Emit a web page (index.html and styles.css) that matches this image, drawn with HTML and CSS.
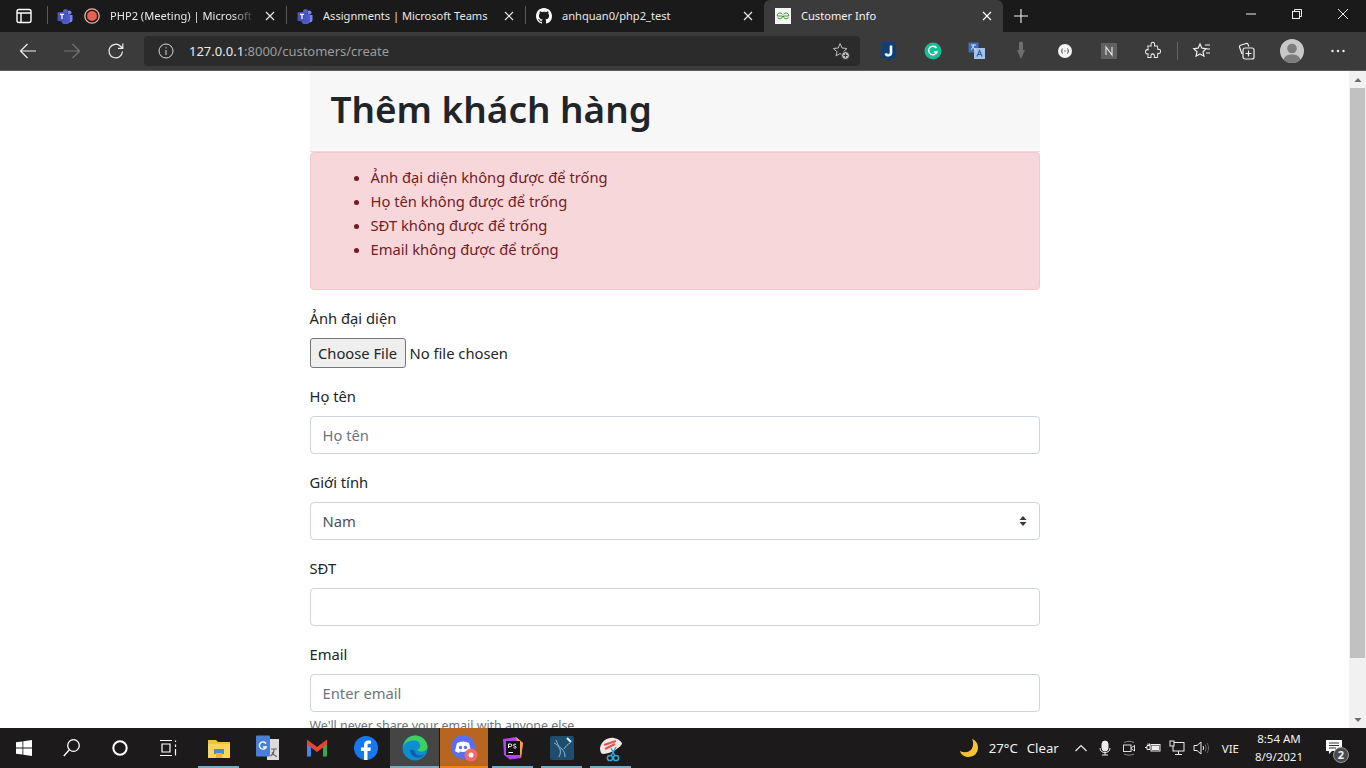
FILE: index.html
```html
<!DOCTYPE html>
<html lang="vi">
<head>
<meta charset="utf-8">
<title>Customer Info</title>
<link rel="stylesheet" href="styles.css">
</head>
<body>
<div class="tabstrip">
  <div class="tabstrip-btn"><svg class="i20" viewBox="0 0 20 20" fill="none" stroke="#fff" stroke-width="1.4"><rect x="3" y="3.5" width="14" height="13" rx="2"/><path d="M3 7h14M7 7v9.5"/></svg></div>
  <div class="sep"></div>
  <div class="tab tab-first">
    <svg class="fav" viewBox="0 0 16 16"><circle cx="12.5" cy="4.5" r="2" fill="#7b83eb"/><path d="M9 7h6.5v4.5a3 3 0 0 1-6 0z" fill="#7b83eb"/><circle cx="8.5" cy="3.5" r="2.5" fill="#5059c9"/><path d="M4 6h9v6a4 4 0 0 1-9 0z" fill="#5059c9"/><rect x="0.5" y="4" width="9" height="9" rx="1" fill="#4b53bc"/><path d="M3 6.3h4M5 6.3v4.6" stroke="#fff" stroke-width="1.2"/></svg>
    <svg class="fav rec" viewBox="0 0 16 16"><circle cx="8" cy="8" r="7.200" fill="none" stroke="#f3b3ab" stroke-width="1.300"/><circle cx="8" cy="8" r="5" fill="#e8604f"/></svg>
    <span class="tab-title fade">PHP2 (Meeting) | Microsoft Teams</span>
    <svg class="close" viewBox="0 0 10 10" stroke="#e6e6e6" stroke-width="1.2"><path d="M1 1l8 8M9 1l-8 8"/></svg>
  </div>
  <div class="sep"></div>
  <div class="tab">
    <svg class="fav" viewBox="0 0 16 16"><circle cx="12.5" cy="4.5" r="2" fill="#7b83eb"/><path d="M9 7h6.5v4.5a3 3 0 0 1-6 0z" fill="#7b83eb"/><circle cx="8.5" cy="3.5" r="2.5" fill="#5059c9"/><path d="M4 6h9v6a4 4 0 0 1-9 0z" fill="#5059c9"/><rect x="0.5" y="4" width="9" height="9" rx="1" fill="#4b53bc"/><path d="M3 6.3h4M5 6.3v4.6" stroke="#fff" stroke-width="1.2"/></svg>
    <span class="tab-title">Assignments | Microsoft Teams</span>
    <svg class="close" viewBox="0 0 10 10" stroke="#e6e6e6" stroke-width="1.2"><path d="M1 1l8 8M9 1l-8 8"/></svg>
  </div>
  <div class="sep"></div>
  <div class="tab">
    <svg class="fav" viewBox="0 0 16 16" fill="#fff"><path d="M8 0C3.58 0 0 3.58 0 8c0 3.54 2.29 6.53 5.47 7.59.4.07.55-.17.55-.38 0-.19-.01-.82-.01-1.49-2.01.37-2.53-.49-2.69-.94-.09-.23-.48-.94-.82-1.13-.28-.15-.68-.52-.01-.53.63-.01 1.08.58 1.23.82.72 1.21 1.87.87 2.33.66.07-.52.28-.87.51-1.07-1.78-.2-3.64-.89-3.64-3.95 0-.87.31-1.59.82-2.15-.08-.2-.36-1.02.08-2.12 0 0 .67-.21 2.2.82.64-.18 1.32-.27 2-.27.68 0 1.36.09 2 .27 1.53-1.04 2.2-.82 2.2-.82.44 1.1.16 1.92.08 2.12.51.56.82 1.27.82 2.15 0 3.07-1.87 3.75-3.65 3.95.29.25.54.73.54 1.48 0 1.07-.01 1.93-.01 2.2 0 .21.15.46.55.38A8.013 8.013 0 0016 8c0-4.42-3.58-8-8-8z"/></svg>
    <span class="tab-title">anhquan0/php2_test</span>
    <svg class="close" viewBox="0 0 10 10" stroke="#e6e6e6" stroke-width="1.2"><path d="M1 1l8 8M9 1l-8 8"/></svg>
  </div>
  <div class="tab tab-active">
    <svg class="fav" viewBox="0 0 16 16"><rect width="16" height="16" fill="#f4f8f2"/><path d="M7.4 6.300A2.800 2.800 0 0 0 2.200 8H7.600A2.800 2.800 0 0 1 2.600 9.700M8.600 6.300A2.800 2.800 0 0 1 13.800 8H8.400A2.800 2.800 0 0 0 13.400 9.700" fill="none" stroke="#4d8a3f" stroke-width="1"/></svg>
    <span class="tab-title">Customer Info</span>
    <svg class="close" viewBox="0 0 10 10" stroke="#fff" stroke-width="1.2"><path d="M1 1l8 8M9 1l-8 8"/></svg>
  </div>
  <div class="newtab"><svg class="i16" viewBox="0 0 16 16" stroke="#f2f2f2" stroke-width="1.1"><path d="M8 1v14M1 8h14"/></svg></div>
  <div class="winctrls">
    <div class="winbtn"><svg class="i12" viewBox="0 0 12 12" stroke="#eee"><path d="M1 6h10"/></svg></div>
    <div class="winbtn"><svg class="i12" viewBox="0 0 12 12" stroke="#eee" fill="none"><rect x="1.5" y="3.5" width="7" height="7"/><path d="M3.5 3.5v-2h7v7h-2"/></svg></div>
    <div class="winbtn"><svg class="i12" viewBox="0 0 12 12" stroke="#eee"><path d="M1 1l10 10M11 1L1 11"/></svg></div>
  </div>
</div>

<div class="toolbar">
  <div class="tb-btn"><svg class="i20" viewBox="0 0 20 20" fill="none" stroke="#f0f0f0" stroke-width="1.2"><path d="M18 10H2.500M9.500 3l-7 7 7 7"/></svg></div>
  <div class="tb-btn"><svg class="i20" viewBox="0 0 20 20" fill="none" stroke="#747474" stroke-width="1.2"><path d="M2 10h15.500M10.500 3l7 7-7 7"/></svg></div>
  <div class="tb-btn"><svg class="i20" viewBox="0 0 20 20" fill="none" stroke="#f0f0f0" stroke-width="1.2"><path d="M16.500 10.500a6.800 6.800 0 1 1-2-5.300l2 2M16.800 2.500v4.800H12"/></svg></div>
  <div class="addr">
    <svg class="addr-info" viewBox="0 0 16 16" fill="none" stroke="#d8d8d8"><circle cx="8" cy="8" r="7"/><path d="M8 7v5M8 4.200v1.300"/></svg>
    <span class="url"><span class="url-host">127.0.0.1</span>:8000/customers/create</span>
    <svg class="addr-star" viewBox="0 0 18 18" fill="none" stroke="#bdbdbd"><path d="M8 1.500l2 4.500 5 .5-3.700 3.300L12 14 8 11.500 4 14l1-4.200L1.300 6.500l5-.5z"/><circle cx="13.500" cy="13.500" r="4" fill="#bdbdbd" stroke="#2b2b2b"/><path d="M13.500 11.500v4M11.500 13.500h4" stroke="#333"/></svg>
  </div>
  <div class="exts">
    <div class="tb-btn"><svg class="i20" viewBox="0 0 20 20"><path d="M3 1h14v15l-7 3.500L3 16z" fill="#0e3f78"/><path d="M12 4.500v7a2.700 2.700 0 0 1-5.300.8" fill="none" stroke="#fff" stroke-width="2.600"/></svg></div>
    <div class="tb-btn"><svg class="i20" viewBox="0 0 20 20"><circle cx="10" cy="10" r="8.500" fill="#15bf94"/><path d="M13.500 7A4.300 4.300 0 1 0 14 11h-3.200" fill="none" stroke="#fff" stroke-width="1.500"/></svg></div>
    <div class="tb-btn"><svg class="i20" viewBox="0 0 20 20"><rect x="1.500" y="1.500" width="10" height="10" fill="#3f6fb8"/><rect x="7" y="7" width="11" height="11" fill="#a5c4ea"/><path d="M4 4h5M6.500 4c0 2-1 3.500-2.500 4.500M5 5.500l3.500 3" stroke="#dfe9f6" fill="none"/><path d="M10 15.500l2.500-6 2.500 6M11 13.500h3" stroke="#2b5fa8" fill="none" stroke-width="1.200"/></svg></div>
    <div class="tb-btn"><svg class="i20" viewBox="0 0 20 20" fill="#6e6e6e"><path d="M8 2.500a2 2 0 0 1 4 0V9h2l-4 9-4-9h2z"/></svg></div>
    <div class="tb-btn"><svg class="i20" viewBox="0 0 20 20"><circle cx="10" cy="10" r="7" fill="#f5f5f5"/><path d="M7.500 7.500c-1 1.500-1 3.500 0 5M12.500 7.500c1 1.500 1 3.500 0 5" fill="none" stroke="#444"/><path d="M9 10h.7M10.500 10h.7" stroke="#444"/></svg></div>
    <div class="tb-btn"><svg class="i20" viewBox="0 0 20 20"><rect x="2" y="2" width="16" height="16" rx="1" fill="#616161"/><path d="M7 14V6l6 8V6" fill="none" stroke="#e8e8e8" stroke-width="1.100"/></svg></div>
    <div class="tb-btn"><svg class="i20" viewBox="-2.500 0 25 20" preserveAspectRatio="none" fill="none" stroke="#f0f0f0" stroke-width="1.100"><path d="M7.500 3.500a2.300 2.300 0 0 1 4.600 0c0 .6-.3 1-.3 1.500H15.500l.500 3.500c.5 0 .8-.3 1.300-.3a2.200 2.200 0 0 1 0 4.400c-.5 0-.8-.3-1.300-.3l-.5 4.200h-4c0-.5.3-.8.300-1.400a2.200 2.200 0 0 0-4.400 0c0 .6.300.9.300 1.400H3.500l.5-3.800c-.5 0-.7.300-1.200.3a2.200 2.200 0 0 1 0-4.400c.5 0 .7.300 1.200.3L3.500 5H7.800c0-.5-.3-.9-.3-1.500z"/></svg></div>
    <div class="tb-sep"></div>
    <div class="tb-btn"><svg class="i20" viewBox="0 0 20 20" fill="none" stroke="#f0f0f0" stroke-width="1.200"><path d="M8 3l1.900 4.200 4.300.5-3.200 3 .9 4.500L8 13l-3.900 2.200.9-4.500-3.200-3 4.300-.5zM13 4h5M15 8h3M14 12h4"/></svg></div>
    <div class="tb-btn"><svg class="i20 coll" viewBox="0 0 20 20" fill="none" stroke="#f0f0f0" stroke-width="1.200"><path d="M6 13L3.500 6c-.3-.9.200-1.500 1-1.800L10 2.500c.9-.3 1.600 0 2 .8l.8 2.200"/><rect x="7" y="7" width="11" height="11" rx="2"/><path d="M12.500 9.500v6M9.500 12.500h6"/></svg></div>
    <div class="tb-btn tb-shift"><svg class="avatar" viewBox="0 0 24 24"><circle cx="12" cy="12" r="12" fill="#c8c8c8"/><circle cx="12" cy="9.500" r="4.800" fill="#7d7d7d"/><path d="M3.500 20.500C5 16.500 8 15.500 12 15.500s7 1 8.500 5A12 12 0 0 1 3.500 20.500z" fill="#7d7d7d"/></svg></div>
    <div class="tb-btn tb-shift"><svg class="i16" viewBox="0 0 16 16" fill="#f0f0f0"><circle cx="2.500" cy="8" r="1.200"/><circle cx="8" cy="8" r="1.200"/><circle cx="13.500" cy="8" r="1.200"/></svg></div>
  </div>
</div>

<div class="viewport">
  <main class="page">
    <div class="container">
      <div class="jumbotron"><h1 class="title">Thêm khách hàng</h1></div>
      <div class="alert">
        <ul class="errors">
          <li>Ảnh đại diện không được để trống</li>
          <li>Họ tên không được để trống</li>
          <li>SĐT không được để trống</li>
          <li>Email không được để trống</li>
        </ul>
      </div>
      <form>
        <div class="group">
          <label class="label" for="avatar">Ảnh đại diện</label>
          <input class="file" id="avatar" type="file">
        </div>
        <div class="group">
          <label class="label" for="name">Họ tên</label>
          <input class="control" id="name" type="text" placeholder="Họ tên">
        </div>
        <div class="group">
          <label class="label" for="gender">Giới tính</label>
          <select class="control select" id="gender"><option>Nam</option><option>Nữ</option></select>
        </div>
        <div class="group">
          <label class="label" for="phone">SĐT</label>
          <input class="control" id="phone" type="text">
        </div>
        <div class="group">
          <label class="label" for="email">Email</label>
          <input class="control" id="email" type="email" placeholder="Enter email">
          <small class="hint">We'll never share your email with anyone else.</small>
        </div>
      </form>
    </div>
  </main>
  <div class="scrollbar">
    <div class="sb-arrow"><svg class="i8" viewBox="0 0 8 8" fill="#6b6b6b"><path d="M4 2l3.500 4h-7z"/></svg></div>
    <div class="sb-thumb"></div>
    <div class="sb-fill"></div>
    <div class="sb-arrow"><svg class="i8" viewBox="0 0 8 8" fill="#6b6b6b"><path d="M4 6L.5 2h7z"/></svg></div>
  </div>
</div>

<div class="taskbar">
  <div class="tk"><svg class="i16" viewBox="0 0 16 16" fill="#fff"><path d="M0 2.300l6.500-.9v6.200H0zM7.300 1.300L16 0v7.600H7.300zM0 8.400h6.500v6.200L0 13.700zM7.300 8.400H16V16l-8.700-1.300z"/></svg></div>
  <div class="tk"><svg class="i20" viewBox="0 0 20 20" fill="none" stroke="#fff" stroke-width="1.300"><circle cx="11.500" cy="7.500" r="5.800"/><path d="M7.300 11.700L1.800 18"/></svg></div>
  <div class="tk"><svg class="i20" viewBox="0 0 20 20" fill="none" stroke="#fff" stroke-width="2"><circle cx="10" cy="10" r="6.700"/></svg></div>
  <div class="tk tk-last"><svg class="i20" viewBox="0 0 20 20" fill="none" stroke="#fff" stroke-width="1.200"><path d="M2 2.500h12M2 17.500h12M4 6h8v8H4zM17.500 2.500v1.500M17.500 6.500V9M17.500 11v6.500"/></svg></div>
  <div class="tk run"><svg class="i24" viewBox="0 0 24 24"><path d="M1 4h8l2 2h12v3H1z" fill="#f5c33b"/><rect x="1" y="8" width="22" height="14" fill="#fbd55c"/><rect x="7" y="13" width="10" height="5" fill="#3f92cf"/><rect x="9" y="17" width="6" height="5" fill="#f0b429"/></svg></div>
  <div class="tk wide"><svg class="i28" viewBox="0 0 28 28"><path d="M13 5h12v21H13z" fill="#dcdcdc"/><rect x="2" y="1.500" width="14" height="21" rx="1" fill="#4a7fd6"/><path d="M12 9.500A3.600 3.600 0 1 0 12.300 13H9" fill="none" stroke="#fff" stroke-width="1.400"/><path d="M17 15h6M20 15v1c0 3-2 5-3.500 6M18 18c1 2 3 4 5 4.500" fill="none" stroke="#666" stroke-width="1.200"/></svg></div>
  <div class="tk wide"><svg class="i24" viewBox="0 0 24 24"><path d="M2 5.500v15h4V10z" fill="#4285f4"/><path d="M18 10v10.500h4v-15z" fill="#34a853"/><path d="M2 3.500v5L12 16l10-7.500v-5L12 11z" fill="#ea4335"/></svg></div>
  <div class="tk wide"><svg class="i24" viewBox="0 0 24 24"><circle cx="12" cy="12" r="12" fill="#1478f0"/><path d="M10 24v-9H7v-3.500h3V9c0-3 1.800-4.500 4.400-4.500 1.200 0 2.200.1 2.600.2v3h-1.800c-1.400 0-1.700.7-1.700 1.700v2.100h3.400l-.5 3.500h-2.900V24z" fill="#fff"/></svg></div>
  <div class="tk active-edge"><svg class="i28" viewBox="0 0 28 28"><circle cx="14" cy="14" r="12.500" fill="#0c8fd0"/><path d="M2 13C3.500 5 9 1.500 14.500 1.500c6.500 0 11.500 5 12 11 .2 3.500-3 5-6 5-2 0-4-.6-4.500-1.500 2.500-.5 3.500-2.500 3-4.500C19 8 16.500 6.500 13 6.500 7.500 6.500 3.500 9 2 13z" fill="#3dd05f"/><path d="M9 16c0 4.500 4 8 8.500 7.500 2.500-.2 4.500-1.300 6-3-5 2-9 .5-9.500-2.500-.2-1-2.500-3-5-2z" fill="#0b5ea8"/></svg></div>
  <div class="tk active-rec"><svg class="i28" viewBox="0 0 28 28"><circle cx="13" cy="13" r="12" fill="#5a6ff0"/><path d="M7 9c4-2 8-2 12 0l2 8c-1 1-3 1.500-4 2l-1-1.500c-2 .5-4 .5-6 0L9 19c-1-.5-3-1-4-2z" fill="#fff"/><circle cx="10.500" cy="13.500" r="1.700" fill="#5a6ff0"/><circle cx="15.500" cy="13.500" r="1.700" fill="#5a6ff0"/><circle cx="21" cy="21" r="6.500" fill="#f06a6a"/><circle cx="21" cy="21" r="2.500" fill="#fff"/></svg></div>
  <div class="tk run"><svg class="i24" viewBox="0 0 24 24"><path d="M2 3l13-2 7 6-2 15-11 1.500L3 19z" fill="#b345f1"/><path d="M15 1l7 6-2 15z" fill="#f9a13e"/><rect x="5" y="5" width="14" height="14" fill="#111"/><path d="M7.500 12V8h2a1.300 1.300 0 0 1 0 2.600h-2M15 8.500c-1-.6-2.500-.4-2.500.7 0 1.300 2.700.8 2.700 2 0 1-1.500 1.200-2.800.5M7.500 16.500h4.500" fill="none" stroke="#fff" stroke-width="1"/></svg></div>
  <div class="tk run"><svg class="i28" viewBox="0 0 28 28"><rect x="2" y="2" width="24" height="24" rx="2" fill="#1e4d6e"/><path d="M8 6c2 5 3 7 6 9 2 2 3 5 3 8M6 9c3 1 5 4 6 6 1 3 0 6-1 8M16 15c2-3 4-5 6-6" fill="none" stroke="#8fb9d3"/><path d="M19 4l4 4" stroke="#e6f0f5" stroke-width="2"/></svg></div>
  <div class="tk run"><svg class="i28" viewBox="0 0 28 28"><path d="M3 14C4 7 11 3 17 4c5 1 8 4 8 6-4 6-14 10-19 10-2 0-3-3-3-6z" fill="#f2e7e4"/><path d="M7 11l12-4M8 15l10-5" stroke="#e0564f" stroke-width="2"/><circle cx="13" cy="24" r="2.600" fill="none" stroke="#35a7d8" stroke-width="1.500"/><circle cx="19" cy="24" r="2.600" fill="none" stroke="#35a7d8" stroke-width="1.500"/><path d="M14 22l5-9M18 22l-4-8" stroke="#35a7d8" stroke-width="1.500"/></svg></div>
  <div class="tray">
    <svg class="i20 moon" viewBox="0 0 20 20"><path d="M13 1c3 1 6 4 6 8.500A9 9 0 0 1 10 19c-4 0-8-2-9-6 5 2.500 10 1 12-2.500C14.500 7.500 14.500 3.500 13 1z" fill="#f7c52f"/></svg>
    <span class="weather">27°C</span>
    <span class="weather clear">Clear</span>
    <svg class="i12 caret" viewBox="0 0 12 12" fill="none" stroke="#eee" stroke-width="1.200"><path d="M.5 9L6 3.500 11.500 9"/></svg>
    <svg class="i16 tray-ico" viewBox="0 0 16 16" fill="none" stroke="#eee"><rect x="5" y="1" width="6" height="10" rx="3" fill="#eee"/><path d="M3 8c0 3 2 4.500 5 4.500s5-1.500 5-4.500M8 12.500V15M5 15h6"/></svg>
    <svg class="i16 tray-ico" viewBox="0 0 16 16" fill="none" stroke="#ddd"><path d="M3 2.500c3-1.500 7-1.500 10 0M3 14c3 1.500 7 1.500 10 0" stroke="#888"/><rect x="2.500" y="5" width="7.500" height="6.500"/><path d="M10 8l3.500-2.500v5.500L10 8.500"/></svg>
    <svg class="i16 tray-ico" viewBox="0 0 16 16" fill="none" stroke="#eee"><rect x="6" y="4.500" width="9" height="6.500"/><rect x="7.500" y="6" width="6" height="3.500" fill="#eee"/><path d="M0 7.500h2M2 5.500h3v4H2zM3 5.500v-2M4.500 5.500v-2"/></svg>
    <svg class="i16 tray-ico" viewBox="0 0 16 16" fill="none" stroke="#eee"><rect x="4" y="2.500" width="11" height="8.500"/><rect x="1" y="1" width="4" height="5" fill="#1c1a1a"/><path d="M9.500 11v3M6 14.500h7"/></svg>
    <svg class="i16 tray-ico tray-last" viewBox="0 0 16 16" fill="none" stroke="#eee"><path d="M1 5.500h3L8 2v12l-4-3.500H1z"/><path d="M10 6c.8 1 .8 3 0 4"/><path d="M12 4.500c1.500 2 1.500 5 0 7M14 3c2 3 2 7 0 10" stroke="#6a6a6a"/></svg>
    <span class="lang">VIE</span>
    <div class="clock"><span>8:54 AM</span><span>8/9/2021</span></div>
    <div class="notif">
      <svg class="i20" viewBox="0 0 20 20"><path d="M1 2h16v11H7l-3 3v-3H1z" fill="#fff"/><path d="M4 5h10M4 7.500h10M4 10h7" stroke="#333"/></svg>
      <span class="notif-badge">2</span>
    </div>
  </div>
</div>
</body>
</html>
```

FILE: styles.css
```css
* { box-sizing: border-box; }
html, body { margin: 0; height: 100%; }
body {
  display: flex;
  flex-direction: column;
  height: 768px;
  overflow: hidden;
  font-family: "Noto Sans", "Open Sans", sans-serif;
  background: #fff;
}
svg { display: block; flex: none; }
.i8 { width: 8px; height: 8px; }
.i12 { width: 12px; height: 12px; }
.i16 { width: 16px; height: 16px; }
.i20 { width: 20px; height: 20px; }
.i24 { width: 24px; height: 24px; }
.i28 { width: 28px; height: 28px; }

/* Tab strip */
.tabstrip {
  display: flex;
  align-items: stretch;
  height: 32px;
  flex: none;
  background: #1a1a1a;
  color: #e8e8e8;
  font-size: 11.1px;
}
.tabstrip-btn {
  width: 47px;
  display: flex;
  align-items: center;
  justify-content: center;
}
.sep { width: 1px; margin: 6px 0 8px; background: #5a5a5a; flex: none; }
.tab {
  width: 238px;
  flex: none;
  display: flex;
  align-items: center;
  padding: 0 10px;
}
.tab-first { padding-left: 9px; }
.tab-active {
  width: 239px;
  background: #3b3b3b;
  border-radius: 6px 6px 0 0;
  color: #f4f4f4;
  padding-left: 11px;
}
.fav { width: 16px; height: 16px; }
.rec { margin-left: 11px; }
.tab-title {
  margin-left: 10px;
  margin-bottom: 1px;
  flex: 1;
  min-width: 0;
  white-space: nowrap;
  overflow: hidden;
}
.fade {
  -webkit-mask-image: linear-gradient(to right, #000 85%, transparent);
  mask-image: linear-gradient(to right, #000 85%, transparent);
}
.close { width: 10px; height: 10px; margin-left: 10px; margin-right: 1px; }
.newtab {
  width: 36px;
  display: flex;
  align-items: center;
  justify-content: center;
}
.winctrls { margin-left: auto; display: flex; }
.winbtn {
  width: 46px;
  display: flex;
  align-items: center;
  justify-content: center;
  padding-bottom: 4px;
}

/* Toolbar */
.toolbar {
  height: 39px;
  flex: none;
  display: flex;
  align-items: center;
  padding: 0 6px;
  background: #3b3b3b;
  border-bottom: 1px solid #5c5c5c;
}
.tb-btn {
  width: 44px;
  height: 30px;
  flex: none;
  display: flex;
  align-items: center;
  justify-content: center;
}
.tb-shift { margin-left: 2px; }
.coll { margin-right: 1px; }
.addr {
  width: 716px;
  height: 30px;
  margin-left: 6px;
  flex: none;
  display: flex;
  align-items: center;
  background: #2b2b2b;
  border-radius: 4px;
  padding: 0 10px 0 14px;
}
.addr-info { width: 16px; height: 16px; }
.url {
  margin-left: 15px;
  flex: 1;
  font-size: 13px;
  color: #9c9c9c;
}
.url-host { color: #ececec; }
.addr-star { width: 18px; height: 18px; }
.exts { display: flex; align-items: center; margin-left: 7px; }
.tb-sep { width: 1px; height: 18px; background: #666; margin: 0 2px; }
.avatar { width: 24px; height: 24px; }

/* Page */
.viewport {
  flex: 1;
  min-height: 0;
  display: flex;
}
.page {
  flex: 1;
  min-width: 0;
  overflow: hidden;
}
.container {
  width: 730px;
  margin: 0 auto;
  color: #212529;
  font-size: 14.75px;
  line-height: 24px;
}
.jumbotron {
  height: 81px;
  padding: 12px 21px;
  background: #f7f7f7;
  border-bottom: 1px solid #e0e0e0;
}
.title {
  margin: 0;
  font-size: 36.9px;
  line-height: 52px;
  font-weight: 600;
}
.alert {
  margin-bottom: 16px;
  padding: 12px 20px;
  background: #f8d7da;
  border: 1px solid #f5c6cb;
  border-radius: 4px;
  color: #721c24;
}
.errors { margin: 0 0 16px; padding-left: 40px; }
.group { margin-bottom: 16px; }
.label { display: block; margin-bottom: 8px; }
.file {
  display: block;
  width: 100%;
  height: 30px;
  font: inherit;
  color: #212529;
}
.file::file-selector-button {
  width: 96px;
  height: 30px;
  margin-right: 4px;
  padding: 0;
  font: inherit;
  color: #212529;
  background: #efefef;
  border: 1px solid #767676;
  border-radius: 3px;
}
.control {
  display: block;
  width: 100%;
  height: 38px;
  padding: 6px 12px;
  font: inherit;
  color: #495057;
  background: #fff;
  border: 1px solid #ced4da;
  border-radius: 4px;
  outline: 0;
}
.control::placeholder { color: #6c757d; opacity: 1; }
.select {
  appearance: none;
  -webkit-appearance: none;
  padding-right: 28px;
  background: #fff url("data:image/svg+xml,%3Csvg xmlns='http://www.w3.org/2000/svg' width='8' height='10'%3E%3Cpath d='M4 0l3.500 4h-7zM4 10L.5 6h7z' fill='%23343a40'/%3E%3C/svg%3E") no-repeat right 12px center;
}
.hint { display: block; margin-top: 4px; font-size: 12.4px; line-height: 19px; color: #6c757d; }

/* Scrollbar */
.scrollbar {
  width: 17px;
  flex: none;
  display: flex;
  flex-direction: column;
  background: #f1f1f1;
}
.sb-arrow {
  height: 17px;
  flex: none;
  display: flex;
  align-items: center;
  justify-content: center;
}
.sb-thumb { height: 570px; margin: 0 1px; background: #c1c1c1; flex: none; }
.sb-fill { flex: 1; }

/* Taskbar */
.taskbar {
  height: 40px;
  flex: none;
  display: flex;
  align-items: stretch;
  background: #1c1a1a;
  color: #f2f2f2;
  font-size: 11.5px;
}
.tk {
  width: 48px;
  flex: none;
  display: flex;
  align-items: center;
  justify-content: center;
  position: relative;
}
.tk-last { margin-right: 2px; }
.tk.run, .tk.wide, .tk.active-edge, .tk.active-rec { width: 49px; }
.run::after, .active-edge::after, .active-rec::after {
  content: "";
  position: absolute;
  left: 4px;
  right: 4px;
  bottom: 0;
  height: 2px;
  background: #76a9c9;
}
.active-edge { background: #454545; }
.active-edge::after { left: 0; right: 0; }
.active-rec { background: #b8651f; border-left: 1px solid #1c1a1a; }
.active-rec::after { left: 0; right: 0; background: #f5800f; }
.tray {
  margin-left: auto;
  display: flex;
  align-items: center;
  padding-right: 21px;
}
.moon { margin-right: 10px; }
.weather { font-size: 13.2px; }
.clear { margin-left: 9px; margin-right: 16px; }
.caret { margin-right: 10px; }
.tray-ico { margin-right: 8px; }
.tray-last { margin-right: 0; }
.lang { margin-left: 13px; margin-right: 16px; }
.clock {
  display: flex;
  flex-direction: column;
  align-items: center;
  line-height: 18px;
  margin-right: 22px;
}
.notif { position: relative; width: 20px; }
.notif-badge {
  position: absolute;
  right: -4px;
  bottom: -5px;
  width: 16px;
  height: 16px;
  border-radius: 50%;
  background: #4a4a4a;
  border: 1px solid #999;
  font-size: 11px;
  font-weight: 700;
  line-height: 14px;
  text-align: center;
}
```
